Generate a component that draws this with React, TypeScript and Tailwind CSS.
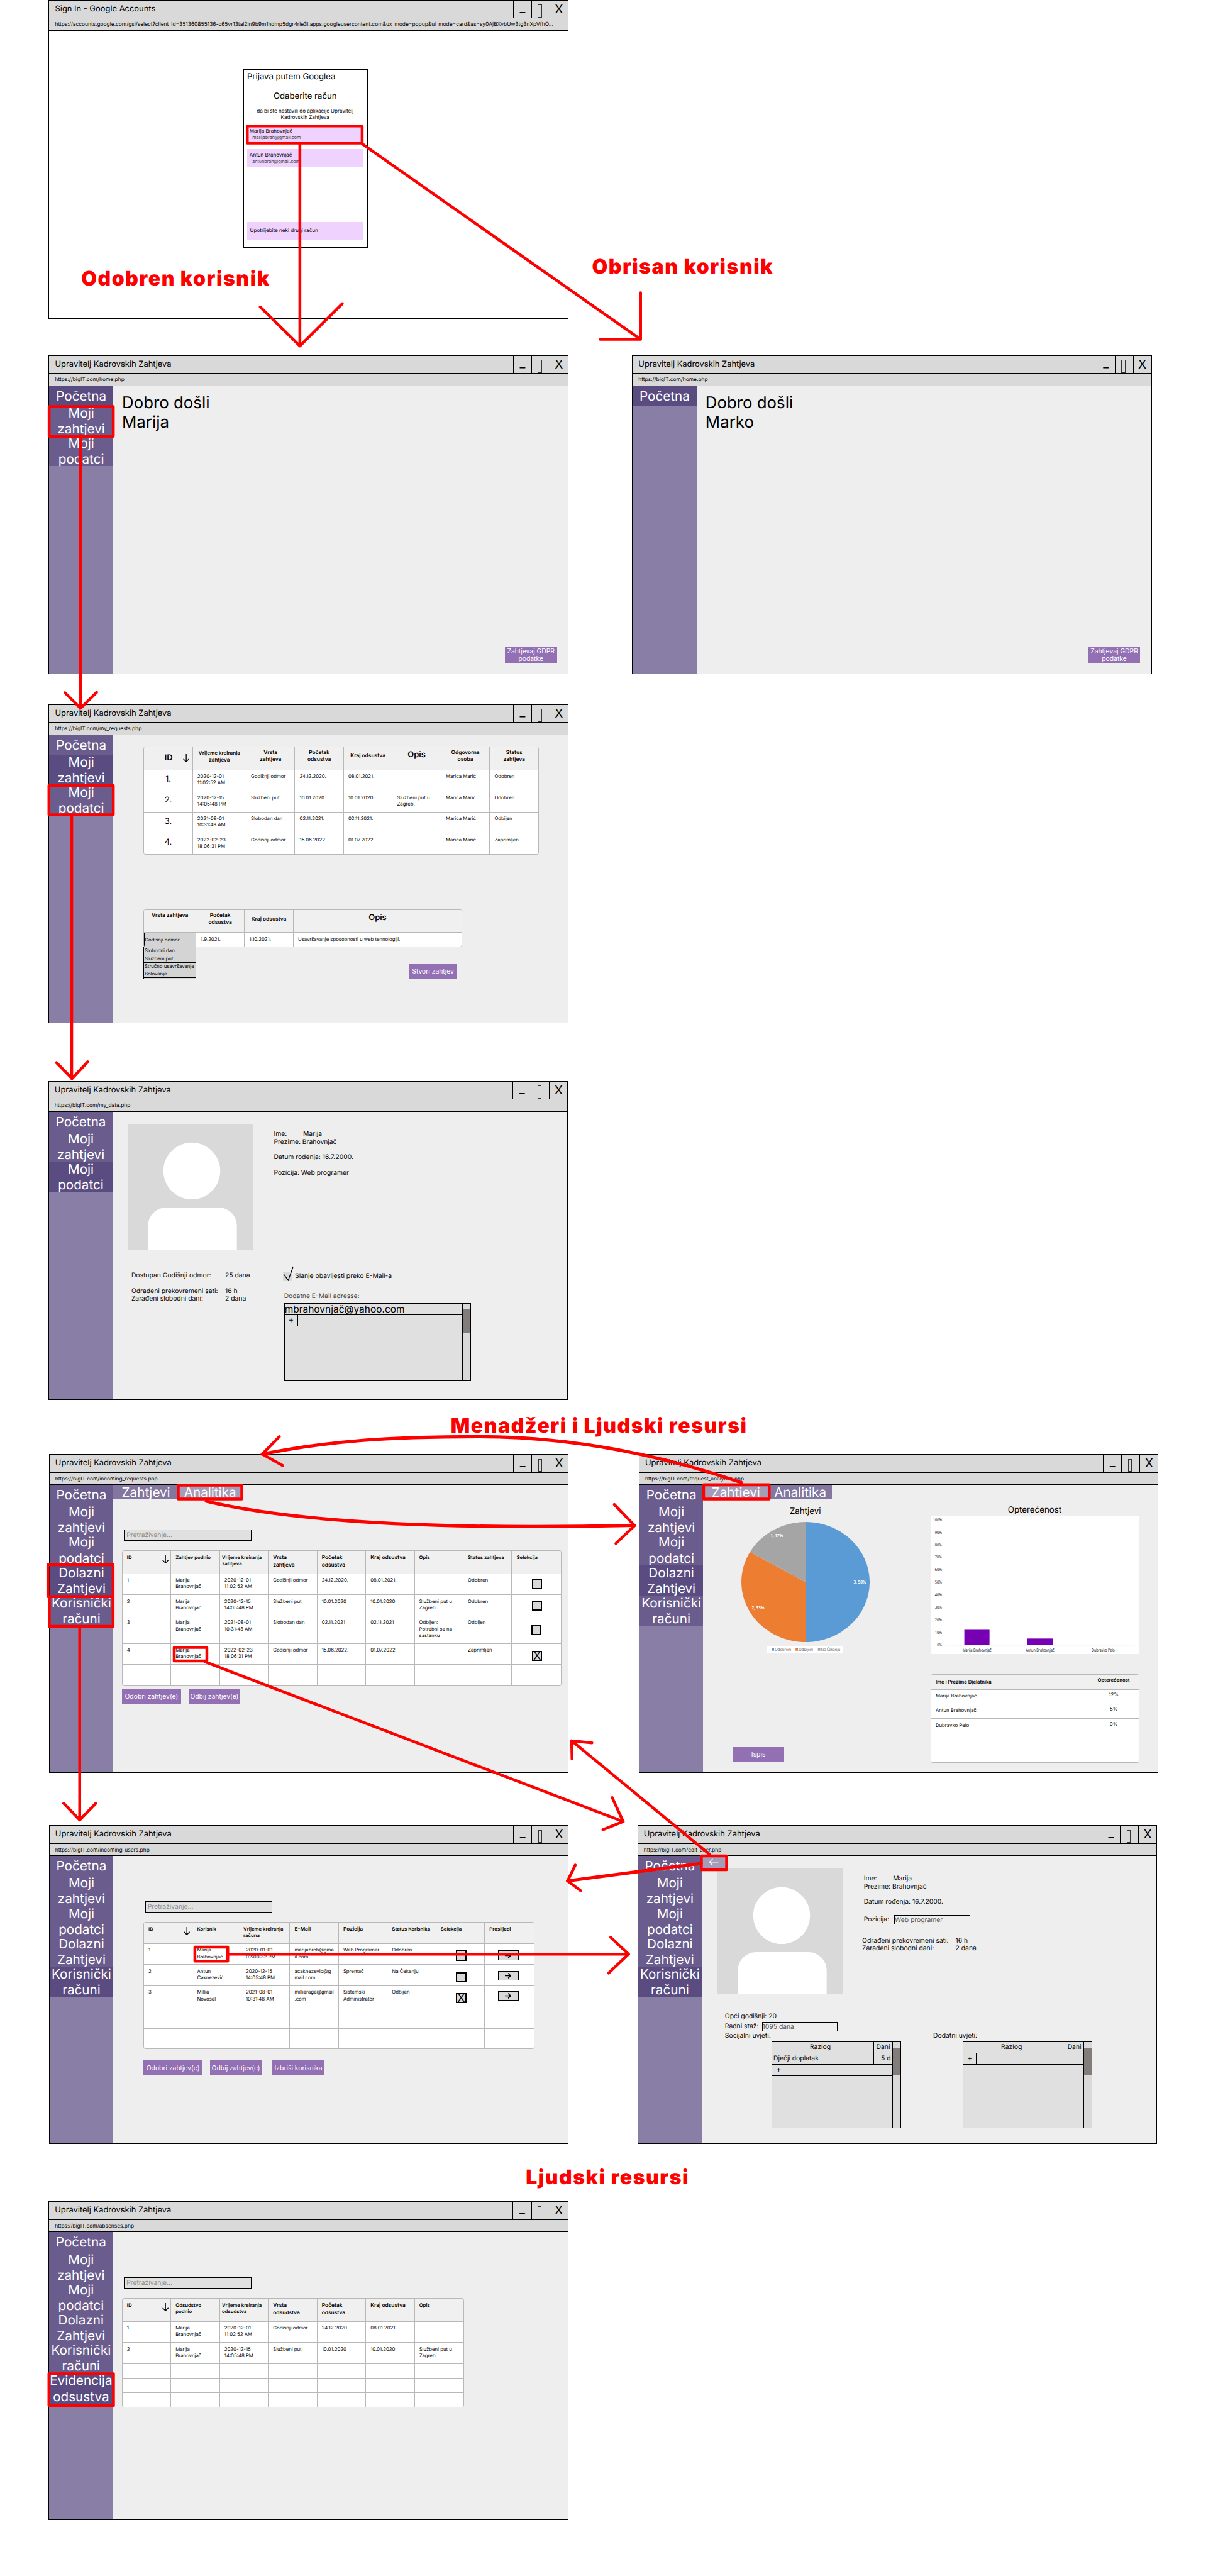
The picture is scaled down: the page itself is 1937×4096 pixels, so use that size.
import type { ReactNode } from "react";

const MENU = ["Početna", "Moji\nzahtjevi", "Moji\npodatci", "Dolazni\nZahtjevi", "Korisnički\nračuni", "Evidencija\nodsustva"];

type BrowserProps = {
  place: string;
  title?: string;
  url: string;
  items?: number;
  active?: number;
  children?: ReactNode;
};

/* A wireframe browser window with title bar, address bar and side menu. */
function Browser({ place, title = "Upravitelj Kadrovskih Zahtjeva", url, items = 0, active = 0, children }: BrowserProps) {
  return (
    <section className={`absolute flex h-[785px] w-[1280px] flex-col border border-black bg-white ${place}`}>
      <header className="flex h-[44px] shrink-0 items-stretch border-b-[3px] border-black bg-[#d9d9d9]">
        <h2 className="flex-1 pl-[14px] text-[20px] leading-[43px]">{title}</h2>
        <div className="w-[45px] border-l-2 border-black text-center text-[30px] leading-[36px]">_</div>
        <div className="flex w-[45px] justify-center border-l-2 border-black pt-[10px] pr-[4px]">
          <span className="h-[32px] w-[10px] border border-[#333]" />
        </div>
        <div className="w-[45px] border-l-2 border-black text-center text-[30px] leading-[43px]">X</div>
      </header>
      <p className="h-[30px] shrink-0 border-b border-black bg-[#d9d9d9] pl-[14px] text-[13px] leading-[31px]">{url}</p>
      <div className="flex min-h-0 flex-1">
        {items > 0 && (
          <nav className="flex w-[157px] shrink-0 flex-col bg-[#897ea5] text-center text-[32px] leading-[38.8px] text-white">
            {MENU.slice(0, items).map((label, i) => (
              <a
                key={label}
                className={`flex shrink-0 items-center justify-center whitespace-pre ${i === 0 ? "h-[48.5px]" : "h-[74.7px]"} ${
                  i === active ? "bg-[#5a4c81]" : "bg-[#6a5d8e]"
                }`}
              >
                {label}
              </a>
            ))}
          </nav>
        )}
        <main className={`flex min-w-0 flex-1 flex-col ${items > 0 ? "bg-[#eeeeee]" : "bg-white"}`}>{children}</main>
      </div>
    </section>
  );
}

type Row = { h: string; cells: ReactNode[] };

function Table({ cols, rows, place = "" }: { cols: string; rows: Row[]; place?: string }) {
  return (
    <div className={`shrink-0 self-start overflow-hidden rounded-[5px] border border-[#b8b8b8] bg-white text-[12px] leading-[16px] ${place}`}>
      {rows.map((row, r) => (
        <div key={r} className={`grid ${cols} ${row.h} ${r === 0 ? "bg-[#f0f0f0] font-semibold" : ""} border-b border-[#b8b8b8] last:border-b-0`}>
          {row.cells.map((cell, c) => (
            <div key={c} className="border-r border-[#b8b8b8] pt-[8.5px] pl-[11px] whitespace-pre last:border-r-0">
              {cell}
            </div>
          ))}
        </div>
      ))}
    </div>
  );
}

const Big = ({ children }: { children: ReactNode }) => <span className="block text-[13px] leading-[18px]">{children}</span>;
const Near = ({ children }: { children: ReactNode }) => <span className="-ml-[6px] block">{children}</span>;
const Mid = ({ children, size = "text-[13px] leading-[18px]" }: { children: ReactNode; size?: string }) => (
  <span className={`-mt-[8px] -ml-[11px] flex h-full items-center justify-center text-center ${size}`}>{children}</span>
);

function DownArrow({ place = "" }: { place?: string }) {
  return (
    <svg viewBox="0 0 16 20" className={`h-[20px] w-[16px] fill-none stroke-black stroke-2 ${place}`}>
      <path d="M8 0V19M1 12L8 19L15 12" />
    </svg>
  );
}

const IdHead = () => (
  <span className="flex justify-between pr-[4px]">
    ID
    <DownArrow place="mt-[2px]" />
  </span>
);

function Check({ place, on = false }: { place: string; on?: boolean }) {
  return (
    <span className={`flex h-[25px] w-[25px] items-center justify-center border-[3.2px] border-black bg-[#d9d9d9] text-[28px] leading-[25px] ${place}`}>
      {on ? "X" : ""}
    </span>
  );
}

function Forward({ place }: { place: string }) {
  return (
    <span className={`flex h-[24px] w-[52px] items-center justify-center border-2 border-black bg-[#d9d9d9] ${place}`}>
      <svg viewBox="0 0 16 14" className="h-[14px] w-[16px] fill-none stroke-black stroke-[2.4]">
        <path d="M0 7H14M8 1L14 7L8 13" />
      </svg>
    </span>
  );
}

function Button({ place, children }: { place: string; children: ReactNode }) {
  return (
    <button className={`flex shrink-0 items-center justify-center bg-[#936fb4] text-center text-[16px] leading-[19.4px] whitespace-pre text-white ${place}`}>
      {children}
    </button>
  );
}

function Search({ place }: { place: string }) {
  return (
    <div className={`h-[28px] w-[314px] shrink-0 border-2 border-black bg-[#e0e0e0] pl-[5px] text-[16px] leading-[27px] text-[#8b8b8b] ${place}`}>
      Pretraživanje...
    </div>
  );
}

function Avatar() {
  return (
    <svg viewBox="0 0 310 310" className="h-[310px] w-[310px] shrink-0">
      <rect width="310" height="310" fill="#d9d9d9" />
      <circle cx="158" cy="116" r="70" fill="#fff" />
      <path d="M50 310V251A45 45 0 0 1 95 206H224A45 45 0 0 1 269 251V310Z" fill="#fff" />
    </svg>
  );
}

function ListBox({ place, top, thumb, children }: { place: string; top: string; thumb: string; children: ReactNode }) {
  return (
    <div className={`flex border-2 border-black bg-[#e0e0e0] ${place}`}>
      <div className="flex-1">{children}</div>
      <div className="flex w-[20px] flex-col border-l-2 border-black bg-[#d9d9d9]">
        <span className={`border-b-2 border-black ${top}`} />
        <span className={`bg-[#827d7b] ${thumb}`} />
        <span className="flex-1" />
        <span className="h-[16px] border-t-2 border-black" />
      </div>
    </div>
  );
}

function AddRow() {
  return (
    <div className="flex h-[28px] border-b-2 border-black">
      <span className="w-[33px] border-r-2 border-black text-center text-[20px] leading-[27px]">+</span>
    </div>
  );
}

function ReasonHead() {
  return (
    <div className="flex h-[28px] border-b-2 border-black text-[16px] leading-[27px]">
      <span className="flex-1 pr-[12px] text-center">Razlog</span>
      <span className="w-[47px] border-l-2 border-black text-center">Dani</span>
    </div>
  );
}

function Account({ name, mail }: { name: string; mail: string }) {
  return (
    <div className="h-[43px] bg-[#efd3fe] pt-[7px] pl-[6px]">
      <p className="text-[12.5px] leading-[15px]">{name}</p>
      <p className="pl-[7px] text-[11px] leading-[14px] text-[#444]">{mail}</p>
    </div>
  );
}

function Tab({ place, children }: { place: string; children: ReactNode }) {
  return <span className={`h-[35px] text-center text-[32px] leading-[36px] text-white ${place}`}>{children}</span>;
}

function PieChart() {
  return (
    <svg viewBox="-158 -148 316 296" className="mt-[13px] h-[296px] w-[316px] shrink-0">
      <path d="M0 0V-148A158 148 0 0 1 0 148Z" fill="#5b9bd5" />
      <path d="M0 0V148A158 148 0 0 1 -136.8 -74Z" fill="#ed7d31" />
      <path d="M0 0L-136.8 -74A158 148 0 0 1 0 -148Z" fill="#a5a5a5" />
      <g className="fill-white font-['Open_Sans'] text-[11px] font-bold" textAnchor="middle">
        <text x="134" y="4" textLength="31" lengthAdjust="spacingAndGlyphs">3, 50%</text>
        <text x="-117" y="68" textLength="31" lengthAdjust="spacingAndGlyphs">2, 33%</text>
        <text x="-71" y="-111" textLength="31" lengthAdjust="spacingAndGlyphs">1, 17%</text>
      </g>
    </svg>
  );
}

function Legend() {
  const keys = [
    { x: 11, w: 40, fill: "#5b9bd5", label: "Odobreni" },
    { x: 70, w: 35, fill: "#ed7d31", label: "Odbijeni" },
    { x: 125, w: 47, fill: "#a5a5a5", label: "Na Čekanju" },
  ];
  return (
    <svg viewBox="0 0 188 18" className="mt-[9px] h-[18px] w-[188px] shrink-0 bg-white">
      {keys.map((k) => (
        <g key={k.label}>
          <rect x={k.x} y="6" width="6" height="6" fill={k.fill} />
          <text x={k.x + 8} y="12.5" textLength={k.w} lengthAdjust="spacingAndGlyphs" className="fill-[#595959] font-['Open_Sans'] text-[10px]">
            {k.label}
          </text>
        </g>
      ))}
    </svg>
  );
}

function BarChart() {
  const bars = [
    { x: 114, name: "Marija Brahovnjač", h: 37.5, w: 71 },
    { x: 269.5, name: "Antun Brahovnjač", h: 16, w: 70 },
    { x: 425, name: "Dubravko Pelo", h: 0, w: 57 },
  ];
  return (
    <svg viewBox="0 0 513 339" className="mt-[3px] h-[339px] w-[513px] shrink-0 bg-white font-['Open_Sans'] text-[10.5px]">
      {Array.from({ length: 11 }, (_, i) => (
        <text key={i} x="28" y={320.8 - i * 30.9} textAnchor="end" textLength={i === 0 ? 12 : i === 10 ? 22 : 17.5} lengthAdjust="spacingAndGlyphs">
          {i * 10}%
        </text>
      ))}
      <line x1="36" x2="503" y1="317" y2="317" stroke="#d9d9d9" strokeWidth="1.5" />
      {bars.map((b) => (
        <g key={b.name}>
          <rect x={b.x - 31} y={317 - b.h} width="62" height={b.h} fill="#7700b3" />
          <text x={b.x} y="332.5" textAnchor="middle" textLength={b.w} lengthAdjust="spacingAndGlyphs">
            {b.name}
          </text>
        </g>
      ))}
    </svg>
  );
}

function Heading({ place, children }: { place: string; children: ReactNode }) {
  return (
    <h1 className={`absolute text-[49.5px] leading-[60px] font-black tracking-[2.4px] whitespace-nowrap text-[#ff0000] ${place}`}>{children}</h1>
  );
}

/* Red frames and arrows that connect the screens. */
function Connectors() {
  return (
    <svg viewBox="0 0 3000 6343" className="absolute top-0 left-0 h-[6343px] w-[3000px] fill-none stroke-[#ff0000] stroke-[7]" strokeLinecap="round" strokeLinejoin="round">
      <rect x="609" y="310" width="283" height="42.5" />
      <path d="M738.6 352V852M641 756L738.6 852L843 748" />
      <path d="M893 355L1577.5 835.5M1577.8 721V835.5H1478" />

      <rect x="121" y="1001.5" width="158" height="73" />
      <path d="M198 1072V1744M238 1705L198.5 1744L160 1706" />

      <rect x="120.5" y="1934" width="158.5" height="72.5" />
      <path d="M176.6 2008V2656M216 2615L177.5 2656L139 2617" />

      <path d="M1826 3651C1620 3580 1400 3538 1176 3538S800 3550 646 3581" strokeWidth="8" />
      <path d="M688 3538L646 3581L696 3609" />
      <path d="M508 3697C710 3745 1050 3768 1563 3756.5" strokeWidth="8" />
      <path d="M1513 3705L1563 3757L1517 3801" />
      <rect x="439" y="3657.5" width="156.5" height="34" />
      <rect x="1733" y="3656.5" width="161.5" height="35" />

      <rect x="118" y="3853.5" width="160.5" height="78.5" />
      <rect x="121.5" y="3932" width="157" height="73" />
      <path d="M196.3 4006V4482M236 4441L196.3 4482L157 4441" />
      <rect x="429" y="4057" width="80.5" height="33.5" />
      <path d="M506 4093L1535 4486M1508 4427L1535 4486L1485 4506" />

      <path d="M1748 4567L1408 4287M1458 4292L1408 4287L1409 4332" />
      <rect x="1727.5" y="4570.5" width="62" height="34" />
      <path d="M1727 4589L1398 4632" strokeWidth="8" />
      <path d="M1417 4593L1398 4632L1430 4656" />

      <rect x="480" y="4795" width="81" height="34.5" />
      <path d="M562 4812.4H1548" />
      <path d="M1504 4771L1548 4812.4L1499 4859" />

      <rect x="120.5" y="5846" width="159" height="78" />
    </svg>
  );
}

const date = ["2020-12-01\n11:02:52 AM", "2020-12-15\n14:05:48 PM", "2021-08-01\n10:31:48 AM", "2022-02-23\n18:06:31 PM"];
const marija = "Marija\nBrahovnjač";
const blank = (n: number): string[] => Array.from({ length: n }, () => "");
const Num = ({ children }: { children: ReactNode }) => <span className="-ml-[11px] block pt-px text-center text-[20px] leading-[26px]">{children}</span>;

function Welcome({ name }: { name: string }) {
  return (
    <div className="flex flex-1 flex-col justify-between pt-[17px] pr-[27px] pb-[26px] pl-[22px]">
      <p className="text-[40px] leading-[48.4px]">
        Dobro došli
        <br />
        {name}
      </p>
      <Button place="h-[40px] w-[128px] self-end">{"Zahtjevaj GDPR\npodatke"}</Button>
    </div>
  );
}

export default function App() {
  return (
    <div className="h-[4096px] w-[1937px] overflow-hidden bg-white">
      <div className="relative h-[6343px] w-[3000px] [zoom:0.645667] bg-white font-[Inter,sans-serif] text-black [text-rendering:geometricPrecision]">
        <Browser
          place="top-0 left-[120px]"
          title="Sign In - Google Accounts"
          url="https://accounts.google.com/gsi/select?client_id=351360855136-c65vr13tal2in9b9m1hdmp5dgr4rie3l.apps.googleusercontent.com&ux_mode=popup&ui_mode=card&as=sy0AjBXvbUw3tg3nXpVfhQ..."
        >
          <div className="mt-[95px] ml-[476px] flex h-[442px] w-[308px] flex-col border-[3.2px] border-black px-[8px] pt-[5px]">
            <p className="text-[20.4px] leading-[24px]">Prijava putem Googlea</p>
            <p className="mt-[23px] text-center text-[20.4px] leading-[24px]">Odaberite račun</p>
            <p className="mt-[15px] text-center text-[12.5px] leading-[15.5px]">
              da bi ste nastavili do aplikacije Upravitelj
              <br />
              Kadrovskih Zahtjeva
            </p>
            <div className="mt-[14px] flex flex-col gap-[15px]">
              <Account name="Marija Brahovnjač" mail="marijabrah@gmail.com" />
              <Account name="Antun Brahovnjač" mail="antunbrah@gmail.com" />
            </div>
            <p className="mt-[136px] h-[43px] bg-[#efd3fe] pl-[7px] text-[12.5px] leading-[43px]">Upotrijebite neki drugi račun</p>
          </div>
        </Browser>

        <Heading place="top-[657px] left-[200px]">Odobren korisnik</Heading>
        <Heading place="top-[627px] left-[1458px]">Obrisan korisnik</Heading>

        <Browser place="top-[875px] left-[120px]" url="https://bigIT.com/home.php" items={3} active={0}>
          <Welcome name="Marija" />
        </Browser>
        <Browser place="top-[875px] left-[1557px]" url="https://bigIT.com/home.php" items={1} active={0}>
          <Welcome name="Marko" />
        </Browser>

        <Browser place="top-[1734.5px] left-[120px]" url="https://bigIT.com/my_requests.php" items={3} active={1}>
          <Table
            place="mt-[28px] ml-[75px]"
            cols="grid-cols-[120px_132px_120px_120px_120px_120px_120px_119px]"
            rows={[
              {
                h: "h-[57px]",
                cells: [
                  <span className="-ml-[11px] flex items-center justify-center pt-[8px] pl-[43px] text-[20px] leading-[22px]">
                    ID
                    <DownArrow place="ml-[25px]" />
                  </span>,
                  <Mid size="text-[12.5px] leading-[17px]">{"Vrijeme kreiranja\nzahtjeva"}</Mid>,
                  <Mid>{"Vrsta\nzahtjeva"}</Mid>,
                  <Mid>{"Početak\nodsustva"}</Mid>,
                  <Mid>Kraj odsustva</Mid>,
                  <Mid size="pb-[10px] text-[20px] leading-[22px]">Opis</Mid>,
                  <Mid>{"Odgovorna\nosoba"}</Mid>,
                  <Mid>{"Status\nzahtjeva"}</Mid>,
                ],
              },
              { h: "h-[52px]", cells: [<Num>1.</Num>, date[0], "Godišnji odmor", "24.12.2020.", "08.01.2021.", "", "Marica Marić", "Odobren"] },
              { h: "h-[52px]", cells: [<Num>2.</Num>, date[1], "Službeni put", "10.01.2020.", "10.01.2020.", "Službeni put u\nZagreb.", "Marica Marić", "Odobren"] },
              { h: "h-[52px]", cells: [<Num>3.</Num>, date[2], "Slobodan dan", "02.11.2021.", "02.11.2021.", "", "Marica Marić", "Odbijen"] },
              { h: "h-[51px]", cells: [<Num>4.</Num>, date[3], "Godišnji odmor", "15.06.2022.", "01.07.2022.", "", "Marica Marić", "Zaprimljen"] },
            ]}
          />
          <Table
            place="mt-[135px] ml-[75px]"
            cols="grid-cols-[128px_120px_120px_414px]"
            rows={[
              {
                h: "h-[56px]",
                cells: [
                  <Mid size="pb-[17px] text-[13px] leading-[18px]">Vrsta zahtjeva</Mid>,
                  <Mid>{"Početak\nodsustva"}</Mid>,
                  <Mid>Kraj odsustva</Mid>,
                  <Mid size="pb-[9px] text-[20px] leading-[22px]">Opis</Mid>,
                ],
              },
              {
                h: "h-[34px]",
                cells: [
                  <span className="-mt-[9.5px] -ml-[12px] block h-[36px] w-[129px] border-2 border-black bg-[#d4d4d4] pl-px leading-[34px]">Godišnji odmor</span>,
                  "1.9.2021.",
                  "1.10.2021.",
                  "Usavršavanje sposobnosti u web tehnologiji.",
                ],
              },
            ]}
          />
          <div className="ml-[75px] flex">
            <ul className="w-[129px] border-x-2 border-black bg-[#d4d4d4] text-[12px] leading-[18px]">
              {["Slobodni dan", "Službeni put", "Stručno usavršavanje", "Bolovanje"].map((o) => (
                <li key={o} className="h-[19px] border-b-2 border-black pl-px whitespace-nowrap">
                  {o}
                </li>
              ))}
            </ul>
            <Button place="mt-[41px] ml-[524px] h-[36px] w-[120px]">Stvori zahtjev</Button>
          </div>
        </Browser>

        <Browser place="top-[2662px] left-[119px]" url="https://bigIT.com/my_data.php" items={3} active={2}>
          <div className="mt-[30px] ml-[37px] flex">
            <Avatar />
            <div className="ml-[50px] pt-[16px] text-[16px] leading-[19.1px]">
              <p className="flex">
                <span className="w-[72px]">Ime:</span>Marija
              </p>
              <p className="mb-[19px]">Prezime: Brahovnjač</p>
              <p className="mb-[19px]">Datum rođenja: 16.7.2000.</p>
              <p>Pozicija: Web programer</p>
            </div>
          </div>
          <div className="mt-[54px] ml-[46px] flex text-[16px] leading-[19.1px]">
            <div className="grid w-[373px] grid-cols-[231px_1fr] content-start">
              <span>Dostupan Godišnji odmor:</span>
              <span className="mb-[19px]">25 dana</span>
              <span>Odrađeni prekovremeni sati:</span>
              <span>16 h</span>
              <span>Zarađeni slobodni dani:</span>
              <span>2 dana</span>
            </div>
            <div>
              <p className="flex items-center pt-[1px]">
                <span className="h-[22px] w-[22px] bg-[#d9d9d9]">
                  <svg viewBox="0 0 22 22" className="h-[22px] w-[22px] overflow-visible fill-none stroke-black stroke-2">
                    <path d="M2 5L13 20L25 -14" />
                  </svg>
                </span>
                <span className="ml-[8px]">Slanje obavijesti preko E-Mail-a</span>
              </p>
              <p className="mt-[28px] ml-[3px] text-[#444]">Dodatne E-Mail adresse:</p>
              <ListBox place="mt-[7px] ml-[3px] h-[192px] w-[460px]" top="h-[15px]" thumb="h-[57px]">
                <p className="h-[28px] border-b-2 border-black text-[24px] leading-[28px]">mbrahovnjač@yahoo.com</p>
                <AddRow />
              </ListBox>
            </div>
          </div>
        </Browser>

        <Heading place="top-[3482px] left-[1110px]">Menadžeri i Ljudski resursi</Heading>

        <Browser place="top-[3581px] left-[120.5px]" url="https://bigIT.com/incoming_requests.php" items={5} active={3}>
          <div className="flex">
            <Tab place="w-[160px] bg-[#83779f] pl-px">Zahtjevi</Tab>
            <Tab place="w-[157px] bg-[#a49db9]">Analitika</Tab>
          </div>
          <Search place="mt-[75px] ml-[26px]" />
          <Table
            place="mt-[24px] ml-[21px]"
            cols="grid-cols-[repeat(9,120px)]"
            rows={[
              {
                h: "h-[56px]",
                cells: [
                  <IdHead />,
                  "Zahtjev podnio",
                  <Near>{"Vrijeme kreiranja\nzahtjeva"}</Near>,
                  <Big>{"Vrsta\nzahtjeva"}</Big>,
                  <Big>{"Početak\nodsustva"}</Big>,
                  <Big>Kraj odsustva</Big>,
                  "Opis",
                  "Status zahtjeva",
                  "Selekcija",
                ],
              },
              { h: "h-[52px]", cells: ["1", marija, date[0], "Godišnji odmor", "24.12.2020.", "08.01.2021.", "", "Odobren", <Check place="mt-[4px] ml-[38px]" />] },
              { h: "h-[52px]", cells: ["2", marija, date[1], "Službeni put", "10.01.2020", "10.01.2020", "Službeni put u\nZagreb.", "Odobren", <Check place="mt-[5px] ml-[38px]" />] },
              { h: "h-[68px]", cells: ["3", marija, date[2], "Slobodan dan", "02.11.2021", "02.11.2021", "Odbijen:\nPotrebni se na\nsastanku", "Odbijen", <Check place="mt-[13px] ml-[36px]" />] },
              { h: "h-[52px]", cells: ["4", marija, date[3], "Godišnji odmor", "15.06.2022.", "01.07.2022", "", "Zaprimljen", <Check on place="mt-[9px] ml-[38px]" />] },
              { h: "h-[51px]", cells: blank(9) },
            ]}
          />
          <div className="mt-[7px] ml-[21px] flex gap-[18px]">
            <Button place="h-[36px] w-[146px]">Odobri zahtjev(e)</Button>
            <Button place="h-[36px] w-[128px]">Odbij zahtjev(e)</Button>
          </div>
        </Browser>

        <Browser place="top-[3581px] left-[1573.5px]" url="https://bigIT.com/request_analytics.php" items={5} active={3}>
          <div className="flex">
            <Tab place="w-[161px] bg-[#a49db9]">Zahtjevi</Tab>
            <Tab place="w-[156px] bg-[#83779f]">Analitika</Tab>
          </div>
          <div className="flex">
            <div className="flex w-[503px] flex-col items-center">
              <h3 className="mt-[20px] text-[20.6px] leading-[24px]">Zahtjevi</h3>
              <PieChart />
              <Legend />
              <Button place="mt-[231px] ml-[72px] h-[36px] w-[128px] self-start">Ispis</Button>
            </div>
            <div className="ml-[57px] flex w-[513px] flex-col items-center">
              <h3 className="mt-[16px] text-[20.6px] leading-[24px]">Opterećenost</h3>
              <BarChart />
              <Table
                place="mt-[50px]"
                cols="grid-cols-[388px_123px]"
                rows={[
                  { h: "h-[36px] pt-px", cells: ["Ime i Prezime Djelatnika", <Mid size="text-[12px] leading-[16px]">Opterećenost</Mid>] },
                  { h: "h-[36px]", cells: ["Marija Brahovnjač", <Mid size="text-[12px] leading-[16px]">12%</Mid>] },
                  { h: "h-[36px]", cells: ["Antun Brahovnjač", <Mid size="text-[12px] leading-[16px]">5%</Mid>] },
                  { h: "h-[36px]", cells: ["Dubravko Pelo", <Mid size="text-[12px] leading-[16px]">0%</Mid>] },
                  { h: "h-[36px]", cells: blank(2) },
                  { h: "h-[34px]", cells: blank(2) },
                ]}
              />
            </div>
          </div>
        </Browser>

        <Browser place="top-[4495px] left-[120.5px]" url="https://bigIT.com/incoming_users.php" items={5} active={4}>
          <Search place="mt-[111px] ml-[78px]" />
          <Table
            place="mt-[24px] ml-[74px]"
            cols="grid-cols-[repeat(8,120px)]"
            rows={[
              {
                h: "h-[52px]",
                cells: [<IdHead />, "Korisnik", <Near>{"Vrijeme kreiranja\nračuna"}</Near>, <Big>E-Mail</Big>, <Big>Pozicija</Big>, "Status Korisnika", "Selekcija", "Proslijedi"],
              },
              {
                h: "h-[52px]",
                cells: ["1", marija, "2020-01-01\n02:00:32 PM", "marijabroh@gma\nil.com", "Web Programer", "Odobren", <Check place="mt-[8px] ml-[38px]" />, <Forward place="mt-[8px] ml-[21px]" />],
              },
              {
                h: "h-[52px]",
                cells: ["2", "Antun\nCaknezević", date[1], "acaknezevic@g\nmail.com", "Spremač", "Na Čekanju", <Check place="mt-[9px] ml-[38px]" />, <Forward place="mt-[6px] ml-[21px]" />],
              },
              {
                h: "h-[52px]",
                cells: ["3", "Millia\nNovosel", date[2], "milliarage@gmail\n.com", "Sistemski\nAdministrator", "Odbijen", <Check on place="mt-[8px] ml-[38px]" />, <Forward place="mt-[4px] ml-[21px]" />],
              },
              { h: "h-[54px]", cells: blank(8) },
              { h: "h-[48px]", cells: blank(8) },
            ]}
          />
          <div className="mt-[28px] ml-[74px] flex">
            <Button place="h-[36px] w-[146px]">Odobri zahtjev(e)</Button>
            <Button place="ml-[18px] h-[36px] w-[128px]">Odbij zahtjev(e)</Button>
            <Button place="ml-[26px] h-[36px] w-[128px]">Izbriši korisnika</Button>
          </div>
        </Browser>

        <Browser place="top-[4495px] left-[1570px]" url="https://bigIT.com/edit_user.php" items={5} active={4}>
          <div className="flex h-[31px] w-[58px] items-center justify-center bg-[#a49db9]">
            <svg viewBox="0 0 24 18" className="h-[18px] w-[24px] fill-none stroke-white stroke-2">
              <path d="M24 9H2M10 1L2 9L10 17" />
            </svg>
          </div>
          <div className="ml-[38px] flex">
            <Avatar />
            <div className="ml-[51px] pt-[16px] text-[16px] leading-[19.1px]">
              <p className="flex">
                <span className="w-[72px]">Ime:</span>Marija
              </p>
              <p>Prezime: Brahovnjač</p>
              <p className="mt-[19px]">Datum rođenja: 16.7.2000.</p>
              <p className="mt-[22px] flex items-center">
                <span className="w-[75px]">Pozicija:</span>
                <span className="h-[24px] w-[187px] border-2 border-black leading-[22px] text-[#555]">Web programer</span>
              </p>
              <div className="mt-[30px] -ml-[4px] grid grid-cols-[230px_1fr]">
                <span>Odrađeni prekovremeni sati:</span>
                <span>16 h</span>
                <span>Zarađeni slobodni dani:</span>
                <span>2 dana</span>
              </div>
            </div>
          </div>
          <div className="mt-[45px] ml-[57px] text-[16px] leading-[19.1px]">
            <p>Opći godišnji: 20</p>
            <p className="mt-[3px] flex items-center">
              <span className="w-[91px]">Radni staž:</span>
              <span className="h-[24px] w-[187px] border-2 border-black leading-[22px] text-[#555]">1095 dana</span>
            </p>
            <p className="mt-[2px] flex">
              <span className="w-[513px]">Socijalni uvjeti:</span>
              <span>Dodatni uvjeti:</span>
            </p>
            <div className="mt-[3px] ml-[115px] flex gap-[152px]">
              <ListBox place="h-[214px] w-[319px]" top="h-[17px]" thumb="h-[66px]">
                <ReasonHead />
                <div className="flex h-[28px] border-b-2 border-black leading-[27px]">
                  <span className="flex-1 pl-[3px]">Dječji doplatak</span>
                  <span className="w-[47px] border-l-2 border-black pr-[4px] text-right">5 d</span>
                </div>
                <AddRow />
              </ListBox>
              <ListBox place="h-[214px] w-[319px]" top="h-[17px]" thumb="h-[66px]">
                <ReasonHead />
                <AddRow />
              </ListBox>
            </div>
          </div>
        </Browser>

        <Heading place="top-[5333px] left-[1295px]">Ljudski resursi</Heading>

        <Browser place="top-[5421.5px] left-[119.5px]" url="https://bigIT.com/absenses.php" items={6} active={5}>
          <Search place="mt-[111px] ml-[27px]" />
          <Table
            place="mt-[24px] ml-[22px]"
            cols="grid-cols-[repeat(7,120px)]"
            rows={[
              {
                h: "h-[56px]",
                cells: [
                  <IdHead />,
                  "Odsudstvo\npodnio",
                  <Near>{"Vrijeme kreiranja\nodsudstva"}</Near>,
                  <Big>{"Vrsta\nodsudstva"}</Big>,
                  <Big>{"Početak\nodsustva"}</Big>,
                  <Big>Kraj odsustva</Big>,
                  "Opis",
                ],
              },
              { h: "h-[52px]", cells: ["1", marija, date[0], "Godišnji odmor", "24.12.2020.", "08.01.2021.", ""] },
              { h: "h-[52px]", cells: ["2", marija, date[1], "Službeni put", "10.01.2020", "10.01.2020", "Službeni put u\nZagreb."] },
              { h: "h-[36px]", cells: blank(7) },
              { h: "h-[36px]", cells: blank(7) },
              { h: "h-[34px]", cells: blank(7) },
            ]}
          />
        </Browser>

        <Connectors />
      </div>
    </div>
  );
}
